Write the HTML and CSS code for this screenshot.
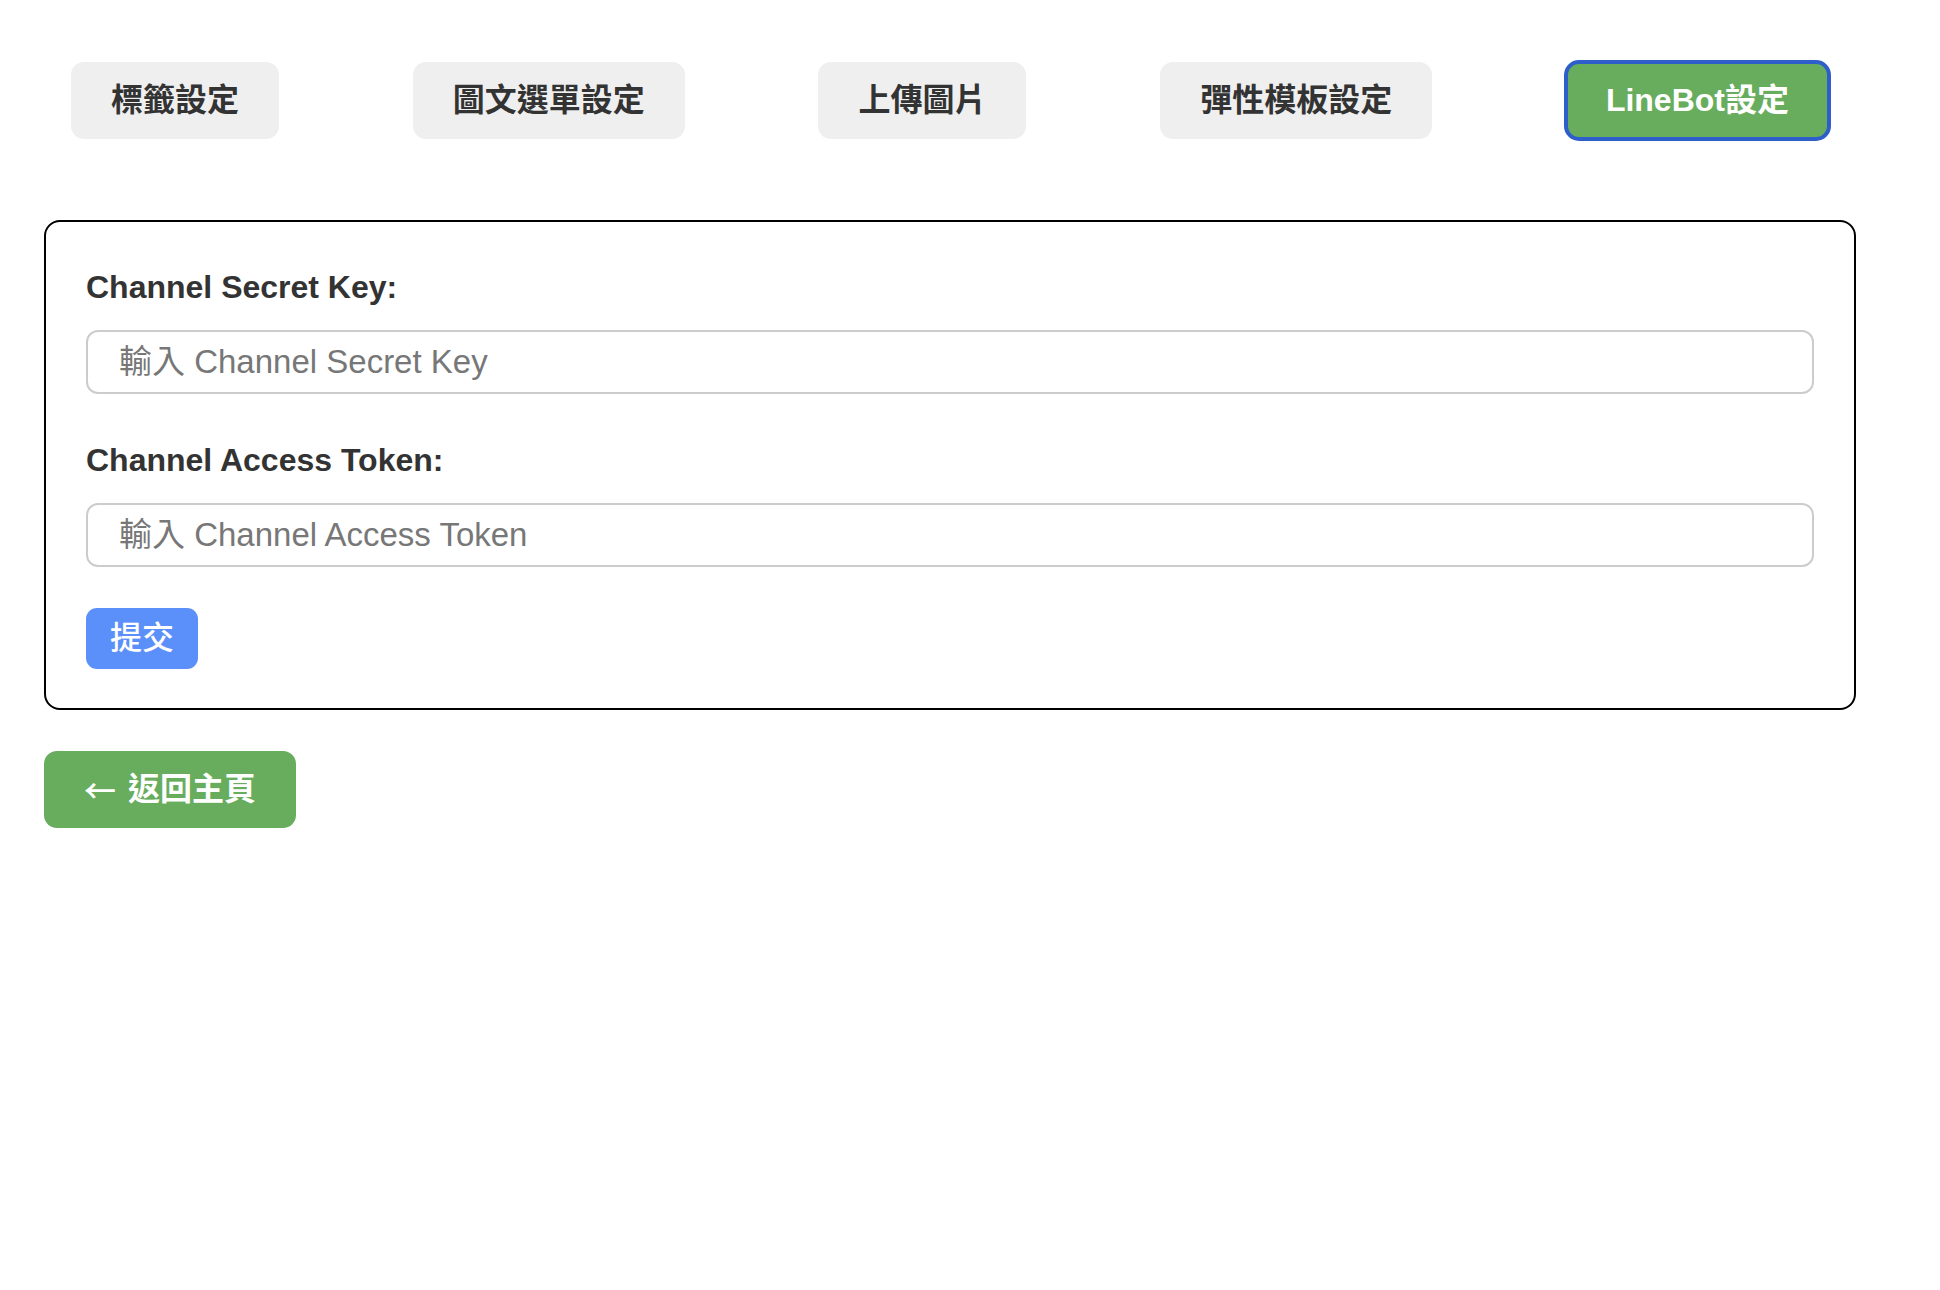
FILE: index.html
```html
<!DOCTYPE html>
<html lang="zh-Hant">
<head>
<meta charset="utf-8">
<title>LineBot設定</title>
<link rel="stylesheet" href="styles.css">
</head>
<body>
<div class="page">
  <nav class="tabs">
    <button class="tab" type="button">標籤設定</button>
    <button class="tab" type="button">圖文選單設定</button>
    <button class="tab" type="button">上傳圖片</button>
    <button class="tab" type="button">彈性模板設定</button>
    <button class="tab tab-active" type="button">LineBot設定</button>
  </nav>

  <form class="card">
    <div class="field">
      <label class="field-label" for="secret">Channel Secret Key:</label>
      <input class="field-input" id="secret" type="text" placeholder="輸入 Channel Secret Key">
    </div>
    <div class="field">
      <label class="field-label" for="token">Channel Access Token:</label>
      <input class="field-input" id="token" type="text" placeholder="輸入 Channel Access Token">
    </div>
    <button class="submit" type="button">提交</button>
  </form>

  <button class="back" type="button"><span class="back-arrow">←</span> 返回主頁</button>
</div>
</body>
</html>
```

FILE: styles.css
```css
html, body {
  margin: 0;
  padding: 0;
  background: #ffffff;
}

body {
  font-family: "Liberation Sans", "Noto Sans CJK TC", sans-serif;
  color: #333333;
}

.page {
  width: 1812px;
  padding: 62px 0 0 44px;
  display: flex;
  flex-direction: column;
  align-items: flex-start;
}

.tabs {
  align-self: stretch;
  display: flex;
  justify-content: space-between;
  padding: 0 27px;
}

.tab {
  box-sizing: border-box;
  height: 77px;
  padding: 0 40px 2px 40px;
  border: none;
  border-radius: 13px;
  background: #efefef;
  color: #333333;
  font-family: "Liberation Sans", "Noto Sans CJK TC", sans-serif;
  font-size: 32px;
  line-height: 1;
  font-weight: 700;
  display: flex;
  align-items: center;
  justify-content: center;
  white-space: nowrap;
}

.tab-active {
  background: #68ad5e;
  color: #ffffff;
  outline: 4px solid #2d5ec9;
  outline-offset: -2px;
}

.card {
  align-self: stretch;
  box-sizing: border-box;
  margin: 81px 0 0 0;
  padding: 40px 40px 39px 40px;
  border: 2px solid #000000;
  border-radius: 16px;
  display: flex;
  flex-direction: column;
  align-items: flex-start;
}

.field {
  align-self: stretch;
  display: flex;
  flex-direction: column;
  margin-bottom: 41px;
}

.field-label {
  display: block;
  padding-top: 5px;
  margin-bottom: 23px;
  font-size: 32px;
  line-height: 40px;
  font-weight: 600;
  color: #333333;
}

.field-input {
  box-sizing: border-box;
  height: 64px;
  margin: 0;
  padding: 0 31px;
  border: 2px solid #cccccc;
  border-radius: 12px;
  background: #ffffff;
  font-family: "Liberation Sans", "Noto Sans CJK TC", sans-serif;
  font-size: 33px;
  color: #333333;
  outline: none;
}

.field-input::placeholder {
  color: #777777;
}

.submit {
  box-sizing: border-box;
  height: 61px;
  padding: 0 24px 2px 24px;
  border: none;
  border-radius: 11px;
  background: #5b8ff9;
  color: #ffffff;
  font-family: "Liberation Sans", "Noto Sans CJK TC", sans-serif;
  font-size: 32px;
  line-height: 1;
  font-weight: 500;
  display: flex;
  align-items: center;
}

.back {
  box-sizing: border-box;
  margin-top: 41px;
  height: 77px;
  padding: 0 40px 2px 40px;
  border: none;
  border-radius: 13px;
  background: #68ad5e;
  color: #ffffff;
  font-family: "Liberation Sans", "Noto Sans CJK TC", sans-serif;
  font-size: 32px;
  line-height: 1;
  font-weight: 700;
  display: flex;
  align-items: center;
  white-space: pre;
}

.back-arrow {
  font-family: "Noto Sans CJK TC", sans-serif;
  font-weight: 500;
  margin-right: 3px;
}
```
